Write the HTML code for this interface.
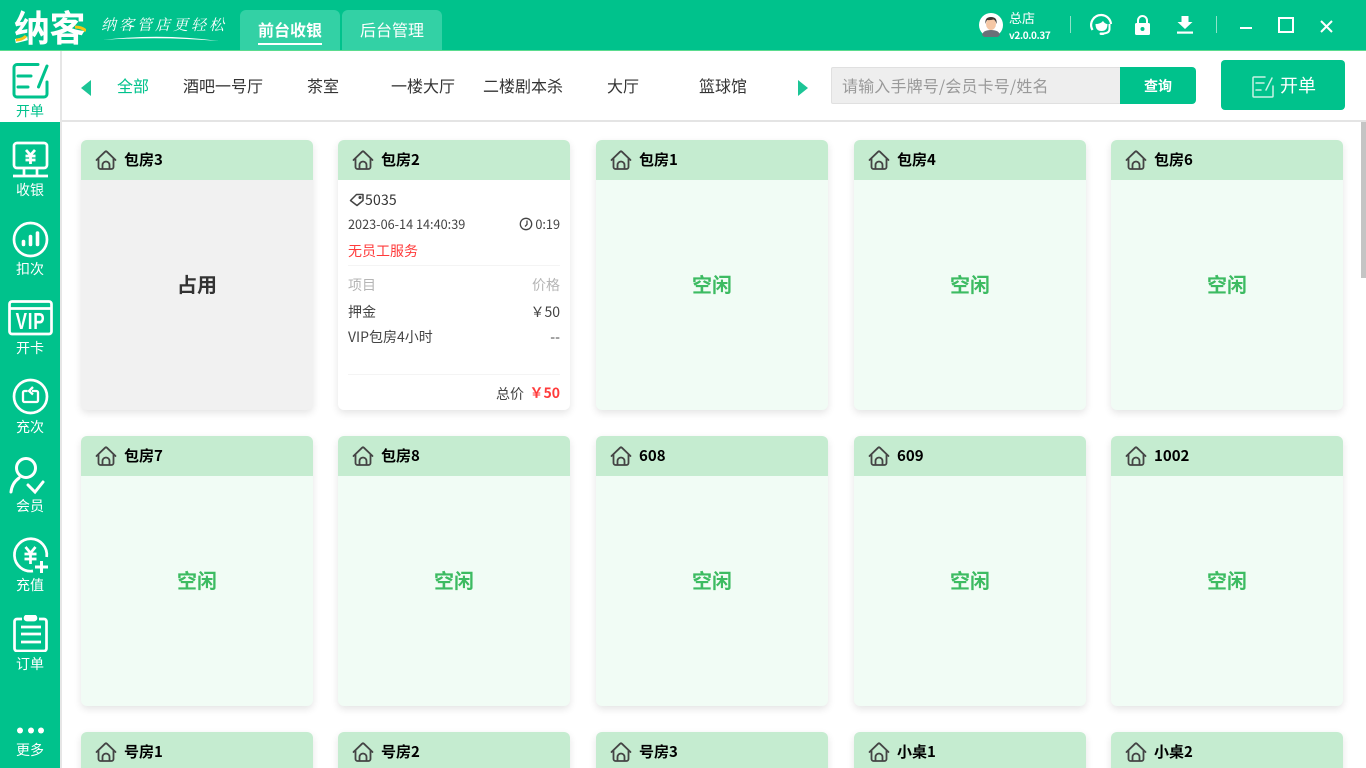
<!DOCTYPE html>
<html lang="zh"><head><meta charset="utf-8"><title>纳客</title>
<style>
*{box-sizing:border-box;margin:0;padding:0}
html,body{width:1366px;height:768px;overflow:hidden;background:#fff}
body{font-family:"Liberation Sans","Noto Sans CJK SC",sans-serif;position:relative;color:#333}
.a{position:absolute;white-space:nowrap}
.top{left:0;top:0;width:1366px;height:51px;background:#00c28c;border-bottom:1px solid #5bdc8f}
.tab{top:10px;height:40px;width:100px;background:#33d1a5;border-radius:6px 6px 0 0;color:#fff;font-size:16px;line-height:39px;text-align:center}
.side{left:0;top:51px;width:60px;height:717px;background:#00c28c}
.sl{left:0;width:60px;text-align:center;color:#fff;font-size:14px;line-height:16px;font-family:"Noto Sans CJK SC",sans-serif}
.cat{top:77px;font-size:16px;line-height:22px;color:#333;text-align:center;transform:translateX(-50%)}
.card{position:absolute;width:232px;height:270px;border-radius:6px;box-shadow:0 3px 8px rgba(0,0,0,.11);background:#f1fcf5;overflow:hidden}
.card .h{height:40px;background:#c5ecd0;position:relative}
.card .h svg{position:absolute;left:14px;top:9px}
.card .h b{position:absolute;left:43px;top:9px;font-size:15px;line-height:22px;color:#000;font-family:"Noto Sans CJK SC",sans-serif;font-weight:700}
.st{position:absolute;left:0;right:0;top:130px;text-align:center;font-size:20px;line-height:28px;font-weight:700;color:#3dbb62;font-family:"Noto Sans CJK SC",sans-serif}
.t{position:absolute;white-space:nowrap;font-family:"Noto Sans CJK SC",sans-serif;font-size:14px;line-height:18px;color:#444}
</style></head><body>
<svg width="0" height="0" style="position:absolute"><defs>
<symbol id="house" viewBox="0 0 22 22"><path d="M1.500 11 10 2.800a1.500 1.500 0 0 1 2 0L20.500 11M3.500 9.500V18a2 2 0 0 0 2 2h11a2 2 0 0 0 2-2V9.500M7.500 20v-4a3.500 3.500 0 0 1 7 0v4" fill="none" stroke="#444" stroke-width="1.800" stroke-linecap="round" stroke-linejoin="round"/></symbol>
</defs></svg>

<div class="a top"></div>
<!-- logo -->
<div class="a" style="left:14px;top:5px;font:700 36px/42px 'Noto Sans CJK SC',sans-serif;color:#fff;letter-spacing:-.5px">纳客</div>
<svg class="a" style="left:14px;top:24px" width="72" height="20"><path d="M2 16q6 0 10-4" stroke="#f5c518" stroke-width="3" fill="none"/><path d="M61 3q7 0 11 4" stroke="#f5c518" stroke-width="3" fill="none"/></svg>
<div class="a" style="left:101px;top:12px;font:italic 400 15px/26px 'Noto Serif CJK SC',serif;color:#fff;letter-spacing:3px">纳客管店更轻松</div>
<svg class="a" style="left:100px;top:32px" width="125" height="12"><path d="M3 8Q60 1 119 9Q60 4 3 8Z" fill="#fff"/></svg>
<div class="a tab" style="left:240px;font-weight:700;font-family:'Noto Sans CJK SC',sans-serif">前台收银</div>
<div class="a" style="left:258px;top:43px;width:64px;height:2px;background:#fff"></div>
<div class="a tab" style="left:342px;font-family:'Noto Sans CJK SC',sans-serif">后台管理</div>

<!-- top right -->
<svg class="a" style="left:979px;top:13px" width="24" height="24" viewBox="0 0 24 24"><circle cx="12" cy="12" r="12" fill="#fff"/><path d="M3 22q1-5 9-5t9 5a12 12 0 0 1-18 0Z" fill="#6b7078"/><ellipse cx="12" cy="11" rx="5" ry="6" fill="#f5c7a5"/><path d="M6.500 11q-1-7 5.500-7t5.500 7q-1-4-3-4.500-4 1-6.500.5-1 1.500-1.500 4Z" fill="#3c3532"/></svg>
<div class="a" style="left:1009px;top:9px;font:400 13px/18px 'Noto Sans CJK SC',sans-serif;color:#fff">总店</div>
<div class="a" style="left:1009px;top:27px;font:700 10px/16px 'Noto Sans CJK SC',sans-serif;color:#fff;letter-spacing:-.4px">v2.0.0.37</div>
<div class="a" style="left:1070px;top:16px;width:1px;height:17px;background:#8fe3c9"></div>
<svg class="a" style="left:1090px;top:13px" width="23" height="24" viewBox="0 0 23 24"><path d="M2.500 17A10 10 0 0 1 11.500 2a10 10 0 0 1 9.500 9" fill="none" stroke="#fff" stroke-width="2.200"/><path d="M5.500 11q5 0 7.500-3 2 3 4.500 3 0 7-6 7t-6-7Z" fill="#fff"/><path d="M19.500 11v5q0 4-6 4.500" fill="none" stroke="#fff" stroke-width="2"/><rect x="9.500" y="19.500" width="5" height="2.500" rx="1.200" fill="#fff"/></svg>
<svg class="a" style="left:1134px;top:15px" width="17" height="21" viewBox="0 0 17 21"><path d="M4 9V5.500a4.500 4.500 0 0 1 9 0V9" fill="none" stroke="#fff" stroke-width="2"/><rect x="1" y="8" width="15" height="12" rx="1.500" fill="#fff"/><circle cx="8.500" cy="14" r="2" fill="#00c28c"/></svg>
<svg class="a" style="left:1176px;top:15px" width="18" height="20" viewBox="0 0 18 20"><path d="M5.500 1h7v6h4L9 14 1.500 7h4Z" fill="#fff"/><rect x="1" y="16.500" width="16" height="2.200" fill="#fff"/></svg>
<div class="a" style="left:1216px;top:16px;width:1px;height:17px;background:#8fe3c9"></div>
<div class="a" style="left:1240px;top:27px;width:12px;height:2px;background:#fff"></div>
<div class="a" style="left:1278px;top:17px;width:16px;height:16px;border:2px solid #fff"></div>
<svg class="a" style="left:1320px;top:20px" width="13" height="13"><path d="M1 1l11 11M12 1 1 12" stroke="#fff" stroke-width="2"/></svg>

<!-- sidebar -->
<div class="a side"></div>
<div class="a" style="left:0;top:51px;width:60px;height:71px;background:#fff"></div>
<div class="a" style="left:60px;top:51px;width:2px;height:717px;background:#e6e6e6"></div>
<svg class="a" style="left:11px;top:61px" width="38" height="38" viewBox="0 0 38 38" fill="none" stroke="#00c28c" stroke-width="3" stroke-linecap="round"><path d="M27 3.500H6a3 3 0 0 0-3 3V33a3 3 0 0 0 3 3h27a3 3 0 0 0 3-3V21"/><path d="M7 15h13M7 26h10M27.500 26l8.500-21"/></svg>
<div class="a sl" style="top:103px;color:#00c28c">开单</div>

<svg class="a" style="left:11px;top:141px" width="38" height="37" viewBox="0 0 38 37" fill="none" stroke="#fff" stroke-width="2.700"><rect x="3" y="2" width="33" height="25" rx="3"/><path d="M13 27v8M26 27v8M2 35h35"/><path d="M15 9l4.500 5 4.500-5M14.500 15h10M14.500 19h10M19.500 14v9" stroke-width="2.800"/></svg>
<div class="a sl" style="top:182px">收银</div>

<svg class="a" style="left:12px;top:220px" width="38" height="38" viewBox="0 0 38 38" fill="none" stroke="#fff"><circle cx="18.500" cy="19.500" r="16.500" stroke-width="2.700"/><path d="M11.500 21.500v3M18.500 16.500v8M25.500 13v11.500" stroke-width="3.600" stroke-linecap="round"/></svg>
<div class="a sl" style="top:261px">扣次</div>

<svg class="a" style="left:8px;top:300px" width="45" height="36" viewBox="0 0 45 36" fill="none" stroke="#fff" stroke-width="2.700"><rect x="1.500" y="1.500" width="42" height="32.500" rx="2.500"/><path d="M1.500 8.500h42"/></svg>
<div class="a" style="left:8px;top:308px;width:45px;text-align:center;font:700 23px/26px 'Liberation Sans',sans-serif;color:#fff;letter-spacing:1px;transform:scaleX(.74)">VIP</div>
<div class="a sl" style="top:340px">开卡</div>

<svg class="a" style="left:12px;top:378px" width="38" height="38" viewBox="0 0 38 38" fill="none" stroke="#fff" stroke-width="2.700"><circle cx="18.500" cy="18.500" r="16.500"/><path d="M15.500 13h-3a1.500 1.500 0 0 0-1.500 1.500v8a1.500 1.500 0 0 0 1.500 1.500h12a1.500 1.500 0 0 0 1.500-1.500v-8a1.500 1.500 0 0 0-1.500-1.500h-4.500M21 9l-4 4 4 3.500" stroke-width="2.300"/></svg>
<div class="a sl" style="top:419px">充次</div>

<svg class="a" style="left:9px;top:457px" width="36" height="38" viewBox="0 0 36 38" fill="none" stroke="#fff" stroke-width="3" stroke-linecap="round"><circle cx="17" cy="11" r="9.500"/><path d="M2 35q1-9 8-14M19 28l7 7 8-10"/></svg>
<div class="a sl" style="top:498px">会员</div>

<svg class="a" style="left:12px;top:536px" width="38" height="38" viewBox="0 0 38 38" fill="none" stroke="#fff" stroke-width="2.700"><path d="M34.700 21A16.200 16.200 0 1 0 21 35"/><path d="M13.500 11l5 6 5-6M12.500 18h12M12.500 23h12M18.500 17v11"/><path d="M23 31h13M29.500 25v12" stroke-width="3"/></svg>
<div class="a sl" style="top:577px">充值</div>

<svg class="a" style="left:13px;top:615px" width="35" height="37" viewBox="0 0 35 37" fill="none" stroke="#fff" stroke-width="2.700"><path d="M9 4H4a2.500 2.500 0 0 0-2.500 2.500v27A2.500 2.500 0 0 0 4 36h27a2.500 2.500 0 0 0 2.500-2.500v-27A2.500 2.500 0 0 0 31 4h-5"/><rect x="12" y="1" width="11" height="4" rx="2" fill="#fff"/><path d="M8 12h20M8 19h20M8 27h20"/></svg>
<div class="a sl" style="top:656px">订单</div>

<svg class="a" style="left:16px;top:726px" width="30" height="9"><circle cx="4" cy="4.500" r="3" fill="#fff"/><circle cx="15" cy="4.500" r="3" fill="#fff"/><circle cx="25" cy="4.500" r="3" fill="#fff"/></svg>
<div class="a sl" style="top:742px">更多</div>

<!-- category bar -->
<div class="a" style="left:62px;top:120px;width:1304px;height:2px;background:#e4e4e4"></div>
<svg class="a" style="left:81px;top:80px" width="10" height="16"><path d="M10 0v16L0 8Z" fill="#1cc596"/></svg>
<div class="a cat" style="left:133px;color:#00c28c">全部</div>
<div class="a cat" style="left:223px">酒吧一号厅</div>
<div class="a cat" style="left:323px">茶室</div>
<div class="a cat" style="left:423px">一楼大厅</div>
<div class="a cat" style="left:523px">二楼剧本杀</div>
<div class="a cat" style="left:623px">大厅</div>
<div class="a cat" style="left:723px">篮球馆</div>
<svg class="a" style="left:798px;top:80px" width="10" height="16"><path d="M0 0v16L10 8Z" fill="#1cc596"/></svg>

<div class="a" style="left:831px;top:67px;width:290px;height:37px;background:#eee;border:1px solid #e0e0e0;border-right:0;border-radius:2px 0 0 2px;padding-left:10px;font:400 16px/35px 'Noto Sans CJK SC',sans-serif;color:#999;letter-spacing:.15px">请输入手牌号/会员卡号/姓名</div>
<div class="a" style="left:1120px;top:67px;width:76px;height:37px;background:#00c28c;border-radius:0 4px 4px 0;color:#fff;text-align:center;font:700 14px/38px 'Noto Sans CJK SC',sans-serif">查询</div>
<div class="a" style="left:1221px;top:60px;width:124px;height:50px;background:#00c28c;border-radius:4px"></div>
<svg class="a" style="left:1252px;top:76px" width="22" height="22" viewBox="0 0 22 22" fill="none" stroke="#c8f2e4" stroke-width="1.500" stroke-linecap="round"><path d="M13 1H2a1 1 0 0 0-1 1v18a1 1 0 0 0 1 1h18a1 1 0 0 0 1-1V10"/><path d="M4 7h8M4 14h5M14 14l6-12"/></svg>
<div class="a" style="left:1280px;top:71px;font:400 18px/28px 'Noto Sans CJK SC',sans-serif;color:#fff">开单</div>

<!-- scrollbar -->
<div class="a" style="left:1361px;top:122px;width:5px;height:156px;background:#c4c4c4"></div>

<!-- row 1 -->
<div class="card" style="left:81px;top:140px;background:#f1f1f1"><div class="h"><svg width="22" height="22"><use href="#house"/></svg><b>包房3</b></div><div class="st" style="color:#333">占用</div></div>
<div class="card" style="left:338px;top:140px;background:#fff"><div class="h"><svg width="22" height="22"><use href="#house"/></svg><b>包房2</b></div>
<svg style="position:absolute;left:11px;top:53px" width="16" height="14" viewBox="0 0 16 14" fill="none" stroke="#444" stroke-width="1.500" stroke-linejoin="round"><path d="M1.500 7.500 7.500 1.500h6.500v6L8 12.500Z"/><circle cx="11" cy="4.500" r=".8" fill="#444"/></svg>
<div class="t" style="left:27px;top:51px;color:#333;letter-spacing:.2px">5035</div>
<div class="t" style="left:10px;top:75px;font-size:12.700px">2023-06-14 14:40:39</div>
<svg style="position:absolute;left:181px;top:77px" width="14" height="14" viewBox="0 0 14 14" fill="none" stroke="#444" stroke-width="1.300"><circle cx="7" cy="7" r="5.700"/><path d="M8 3.500V7.500L6 9.500"/></svg>
<div class="t" style="right:10px;top:75px;font-size:12.700px">0:19</div>
<div class="t" style="left:10px;top:102px;color:#ff3b3b">无员工服务</div>
<div style="position:absolute;left:10px;right:10px;top:125px;height:1px;background:#f4f4f4"></div>
<div class="t" style="left:10px;top:136px;color:#b5b5b5">项目</div>
<div class="t" style="right:10px;top:136px;color:#b5b5b5">价格</div>
<div class="t" style="left:10px;top:163px">押金</div>
<div class="t" style="right:10px;top:163px">￥50</div>
<div class="t" style="left:10px;top:188px">VIP包房4小时</div>
<div class="t" style="right:10px;top:188px">--</div>
<div style="position:absolute;left:10px;right:10px;top:234px;height:1px;background:#f4f4f4"></div>
<div class="t" style="right:46px;top:245px">总价</div>
<div class="t" style="right:10px;top:244px;font-weight:700;color:#ff3b3b">￥50</div>
</div>
<div class="card" style="left:596px;top:140px"><div class="h"><svg width="22" height="22"><use href="#house"/></svg><b>包房1</b></div><div class="st">空闲</div></div>
<div class="card" style="left:854px;top:140px"><div class="h"><svg width="22" height="22"><use href="#house"/></svg><b>包房4</b></div><div class="st">空闲</div></div>
<div class="card" style="left:1111px;top:140px"><div class="h"><svg width="22" height="22"><use href="#house"/></svg><b>包房6</b></div><div class="st">空闲</div></div>

<!-- row 2 -->
<div class="card" style="left:81px;top:436px"><div class="h"><svg width="22" height="22"><use href="#house"/></svg><b>包房7</b></div><div class="st">空闲</div></div>
<div class="card" style="left:338px;top:436px"><div class="h"><svg width="22" height="22"><use href="#house"/></svg><b>包房8</b></div><div class="st">空闲</div></div>
<div class="card" style="left:596px;top:436px"><div class="h"><svg width="22" height="22"><use href="#house"/></svg><b>608</b></div><div class="st">空闲</div></div>
<div class="card" style="left:854px;top:436px"><div class="h"><svg width="22" height="22"><use href="#house"/></svg><b>609</b></div><div class="st">空闲</div></div>
<div class="card" style="left:1111px;top:436px"><div class="h"><svg width="22" height="22"><use href="#house"/></svg><b>1002</b></div><div class="st">空闲</div></div>

<!-- row 3 -->
<div class="card" style="left:81px;top:732px"><div class="h"><svg width="22" height="22"><use href="#house"/></svg><b>号房1</b></div></div>
<div class="card" style="left:338px;top:732px"><div class="h"><svg width="22" height="22"><use href="#house"/></svg><b>号房2</b></div></div>
<div class="card" style="left:596px;top:732px"><div class="h"><svg width="22" height="22"><use href="#house"/></svg><b>号房3</b></div></div>
<div class="card" style="left:854px;top:732px"><div class="h"><svg width="22" height="22"><use href="#house"/></svg><b>小桌1</b></div></div>
<div class="card" style="left:1111px;top:732px"><div class="h"><svg width="22" height="22"><use href="#house"/></svg><b>小桌2</b></div></div>
</body></html>
